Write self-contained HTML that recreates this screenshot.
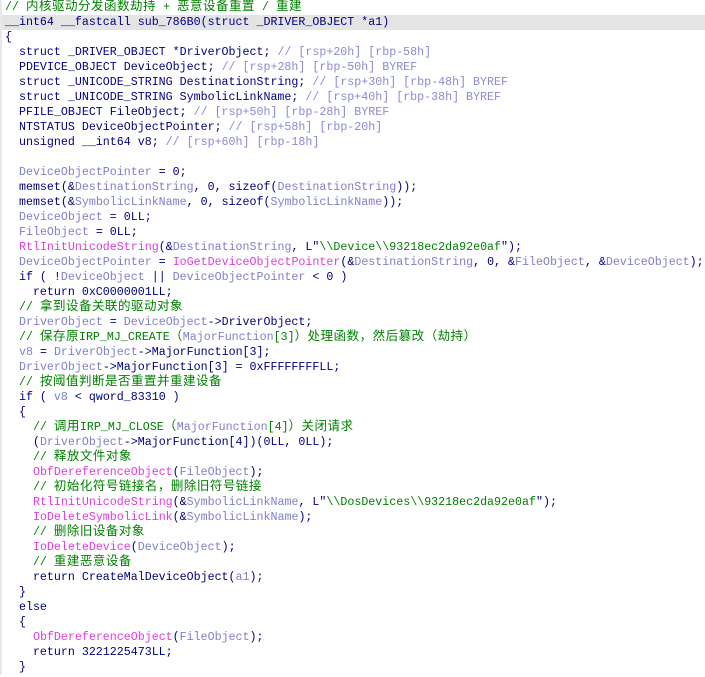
<!DOCTYPE html>
<html><head><meta charset="utf-8"><style>
html,body{margin:0;padding:0;background:#fff;width:705px;height:677px;overflow:hidden}
pre{margin:0;padding:0 0 0 3px;font-family:"Liberation Mono","Noto Sans CJK SC",monospace;font-size:11.65px;line-height:15px;color:#000080;border-left:2px solid #e8e8e8}
.l{display:block;height:15px;white-space:pre;overflow:visible}
.hl{background:#e4e4e4;margin-left:-3px;padding-left:3px}
.v{color:#7f7fcc}.f{color:#e03ce0}.c{color:#008000}.g{color:#8a8ad6}.s{color:#008000}
.k{font-family:"Noto Sans CJK SC",sans-serif;font-size:12.5px;letter-spacing:0.5px;line-height:0;vertical-align:baseline}
</style></head><body><pre><span class="l c">// <span class="k">内核驱动分发函数劫持</span> + <span class="k">恶意设备重置</span> / <span class="k">重建</span></span><span class="l hl">__int64 __fastcall sub_786B0(struct _DRIVER_OBJECT *a1)</span><span class="l">{</span><span class="l">  struct _DRIVER_OBJECT *DriverObject; <span class="g">// [rsp+20h] [rbp-58h]</span></span><span class="l">  PDEVICE_OBJECT DeviceObject; <span class="g">// [rsp+28h] [rbp-50h] BYREF</span></span><span class="l">  struct _UNICODE_STRING DestinationString; <span class="g">// [rsp+30h] [rbp-48h] BYREF</span></span><span class="l">  struct _UNICODE_STRING SymbolicLinkName; <span class="g">// [rsp+40h] [rbp-38h] BYREF</span></span><span class="l">  PFILE_OBJECT FileObject; <span class="g">// [rsp+50h] [rbp-28h] BYREF</span></span><span class="l">  NTSTATUS DeviceObjectPointer; <span class="g">// [rsp+58h] [rbp-20h]</span></span><span class="l">  unsigned __int64 v8; <span class="g">// [rsp+60h] [rbp-18h]</span></span><span class="l"> </span><span class="l">  <span class="v">DeviceObjectPointer</span> = 0;</span><span class="l">  memset(&amp;<span class="v">DestinationString</span>, 0, sizeof(<span class="v">DestinationString</span>));</span><span class="l">  memset(&amp;<span class="v">SymbolicLinkName</span>, 0, sizeof(<span class="v">SymbolicLinkName</span>));</span><span class="l">  <span class="v">DeviceObject</span> = 0LL;</span><span class="l">  <span class="v">FileObject</span> = 0LL;</span><span class="l">  <span class="f">RtlInitUnicodeString</span>(&amp;<span class="v">DestinationString</span>, L"<span class="s">\\Device\\93218ec2da92e0af</span>");</span><span class="l">  <span class="v">DeviceObjectPointer</span> = <span class="f">IoGetDeviceObjectPointer</span>(&amp;<span class="v">DestinationString</span>, 0, &amp;<span class="v">FileObject</span>, &amp;<span class="v">DeviceObject</span>);</span><span class="l">  if ( !<span class="v">DeviceObject</span> || <span class="v">DeviceObjectPointer</span> &lt; 0 )</span><span class="l">    return 0xC0000001LL;</span><span class="l c">  // <span class="k">拿到设备关联的驱动对象</span></span><span class="l">  <span class="v">DriverObject</span> = <span class="v">DeviceObject</span>-&gt;DriverObject;</span><span class="l"><span class="c">  // <span class="k">保存原</span>IRP_MJ_CREATE<span class="k">（</span></span><span class="v">MajorFunction</span><span class="c">[3]<span class="k">）处理函数，然后篡改（劫持）</span></span></span><span class="l">  <span class="v">v8</span> = <span class="v">DriverObject</span>-&gt;MajorFunction[3];</span><span class="l">  <span class="v">DriverObject</span>-&gt;MajorFunction[3] = 0xFFFFFFFFLL;</span><span class="l c">  // <span class="k">按阈值判断是否重置并重建设备</span></span><span class="l">  if ( <span class="v">v8</span> &lt; qword_83310 )</span><span class="l">  {</span><span class="l"><span class="c">    // <span class="k">调用</span>IRP_MJ_CLOSE<span class="k">（</span></span><span class="v">MajorFunction</span><span class="c">[4]<span class="k">）关闭请求</span></span></span><span class="l">    (<span class="v">DriverObject</span>-&gt;MajorFunction[4])(0LL, 0LL);</span><span class="l c">    // <span class="k">释放文件对象</span></span><span class="l">    <span class="f">ObfDereferenceObject</span>(<span class="v">FileObject</span>);</span><span class="l c">    // <span class="k">初始化符号链接名，删除旧符号链接</span></span><span class="l">    <span class="f">RtlInitUnicodeString</span>(&amp;<span class="v">SymbolicLinkName</span>, L"<span class="s">\\DosDevices\\93218ec2da92e0af</span>");</span><span class="l">    <span class="f">IoDeleteSymbolicLink</span>(&amp;<span class="v">SymbolicLinkName</span>);</span><span class="l c">    // <span class="k">删除旧设备对象</span></span><span class="l">    <span class="f">IoDeleteDevice</span>(<span class="v">DeviceObject</span>);</span><span class="l c">    // <span class="k">重建恶意设备</span></span><span class="l">    return CreateMalDeviceObject(<span class="v">a1</span>);</span><span class="l">  }</span><span class="l">  else</span><span class="l">  {</span><span class="l">    <span class="f">ObfDereferenceObject</span>(<span class="v">FileObject</span>);</span><span class="l">    return 3221225473LL;</span><span class="l">  }</span></pre></body></html>
